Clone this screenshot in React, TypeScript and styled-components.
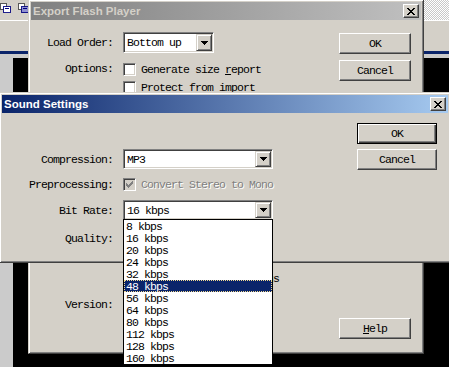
import React from "react";
import styled, { createGlobalStyle } from "styled-components";

const face = "#d4d0c8";
const mono = `"Liberation Mono", "DejaVu Sans Mono", monospace`;

const GlobalStyle = createGlobalStyle`
  html, body { margin: 0; padding: 0; }
  body {
    width: 449px;
    height: 367px;
    overflow: hidden;
    background: #000;
    font-family: ${mono};
    font-size: 11.5px;
    letter-spacing: -0.9px;
    color: #000;
  }
`;

const Screen = styled.div`
  position: relative;
  width: 449px;
  height: 367px;
  overflow: hidden;
  display: flex;
  flex-direction: column;
  background: ${face};
`;

// ---- application behind the dialogs ----

const Toolbar = styled.div`
  height: 20px;
  display: flex;
  border-bottom: 1px solid #fff;
`;

const ToolIcons = styled.div`
  width: 28px;
  display: flex;
  gap: 7px;
  padding-top: 2px;
  background: ${face};
`;

const Checker = styled.div`
  flex: 1;
  background-color: #fff;
  background-image: conic-gradient(#c8c8c8 25%, #fff 0 50%, #c8c8c8 0 75%, #fff 0);
  background-size: 2px 2px;
`;

const Panel = styled.div`
  height: 30px;
  background: ${face};
`;

const TimelineBar = styled.div`
  height: 3px;
  background: #0a246a;
`;

const Strip = styled.div`
  height: 4px;
  background: #cbcbcb;
`;

const Stage = styled.div`
  flex: 1;
  display: flex;
`;

const Ruler = styled.div`
  width: 13px;
  background: #cbcbcb;
`;

const Canvas = styled.div`
  flex: 1;
  background: #000;
`;

// ---- window chrome ----

const Window = styled.div<{ $left: number; $top: number; $width: number; $height: number }>`
  position: absolute;
  left: ${(p) => p.$left}px;
  top: ${(p) => p.$top}px;
  width: ${(p) => p.$width}px;
  height: ${(p) => p.$height}px;
  box-sizing: border-box;
  display: flex;
  flex-direction: column;
  padding: 2px;
  background: ${face};
  border: 1px solid;
  border-color: ${face} #404040 #404040 ${face};
  box-shadow: inset 1px 1px #fff, inset -1px -1px #808080;
`;

const TitleBar = styled.div<{ $active?: boolean }>`
  height: 18px;
  flex-shrink: 0;
  display: flex;
  align-items: center;
  justify-content: space-between;
  padding: 0 2px;
  background: ${(p) =>
    p.$active
      ? "linear-gradient(to right, #0a246a, #a6caf0)"
      : "linear-gradient(to right, #808080, #c0c0c0)"};
  color: ${(p) => (p.$active ? "#fff" : face)};
  font-family: "Liberation Sans", Arial, sans-serif;
  font-weight: bold;
  font-size: 11.5px;
  letter-spacing: 0;
`;

const CloseButton = styled.div`
  width: 16px;
  height: 14px;
  box-sizing: border-box;
  display: flex;
  align-items: center;
  justify-content: center;
  background: ${face};
  border: 1px solid;
  border-color: #fff #404040 #404040 #fff;
  box-shadow: inset -1px -1px #808080;
`;

const Body = styled.div<{ $padRight: number }>`
  flex: 1;
  display: flex;
  padding-right: ${(p) => p.$padRight}px;
`;

const Form = styled.div<{ $label: number; $rows: string; $gap: number; $top: number; $bottom: number }>`
  flex: 1;
  display: grid;
  grid-template-columns: ${(p) => p.$label}px 1fr;
  grid-template-rows: ${(p) => p.$rows};
  column-gap: 10px;
  row-gap: ${(p) => p.$gap}px;
  align-items: center;
  padding-top: ${(p) => p.$top}px;
  padding-bottom: ${(p) => p.$bottom}px;
`;

const Label = styled.div<{ $top?: boolean }>`
  text-align: right;
  white-space: nowrap;
  align-self: ${(p) => (p.$top ? "start" : "center")};
  line-height: ${(p) => (p.$top ? "18px" : "normal")};
`;

const Spacer = styled.div`
  grid-column: 1 / -1;
`;

const ButtonColumn = styled.div<{ $top: number; $gap: number; $bottom?: number }>`
  display: flex;
  flex-direction: column;
  gap: ${(p) => p.$gap}px;
  padding-top: ${(p) => p.$top}px;
  padding-bottom: ${(p) => p.$bottom ?? 0}px;
`;

const Button = styled.div<{ $width: number; $default?: boolean; $push?: boolean }>`
  width: ${(p) => p.$width}px;
  height: 21px;
  box-sizing: border-box;
  display: flex;
  align-items: center;
  justify-content: center;
  background: ${face};
  margin-top: ${(p) => (p.$push ? "auto" : "0")};
  border: 1px solid;
  border-color: ${(p) => (p.$default ? "#000" : "#fff #404040 #404040 #fff")};
  box-shadow: ${(p) =>
    p.$default
      ? "inset 1px 1px #fff, inset -1px -1px #404040, inset -2px -2px #808080"
      : "inset -1px -1px #808080"};
`;

// ---- controls ----

const Combo = styled.div<{ $width: number; $height: number }>`
  position: relative;
  width: ${(p) => p.$width}px;
  height: ${(p) => p.$height}px;
  box-sizing: border-box;
  display: flex;
  align-items: center;
  justify-content: space-between;
  padding: 0 1px 0 3px;
  background: #fff;
  border: 1px solid;
  border-color: #808080 #fff #fff #808080;
  box-shadow: inset 1px 1px #404040, inset -1px -1px ${face};
`;

const ComboButton = styled.div`
  width: 16px;
  height: calc(100% - 2px);
  box-sizing: border-box;
  display: flex;
  align-items: center;
  justify-content: center;
  background: ${face};
  border: 1px solid;
  border-color: ${face} #404040 #404040 ${face};
  box-shadow: inset 1px 1px #fff, inset -1px -1px #808080;
`;

const DropList = styled.div`
  position: absolute;
  left: -1px;
  top: 100%;
  width: 150px;
  box-sizing: border-box;
  background: #fff;
  border: 1px solid #000;
  z-index: 2;
`;

const ListItem = styled.div<{ $selected?: boolean }>`
  height: 12px;
  line-height: 13px;
  padding-left: 2px;
  white-space: nowrap;
  background: ${(p) => (p.$selected ? "#0a246a" : "transparent")};
  color: ${(p) => (p.$selected ? "#fff" : "#000")};
  outline: ${(p) => (p.$selected ? "1px dotted #f0d890" : "none")};
  outline-offset: -1px;
`;

const CheckList = styled.div`
  display: flex;
  flex-direction: column;
`;

const CheckRow = styled.div`
  height: 18px;
  display: flex;
  align-items: center;
  gap: 5px;
  white-space: nowrap;
`;

const Box = styled.div<{ $disabled?: boolean }>`
  width: 13px;
  height: 13px;
  flex-shrink: 0;
  box-sizing: border-box;
  display: flex;
  align-items: center;
  justify-content: center;
  background: ${(p) => (p.$disabled ? face : "#fff")};
  border: 1px solid;
  border-color: #808080 #fff #fff #808080;
  box-shadow: inset 1px 1px #404040, inset -1px -1px ${face};
`;

const CheckText = styled.span<{ $disabled?: boolean }>`
  color: ${(p) => (p.$disabled ? "#808080" : "#000")};
  text-shadow: ${(p) => (p.$disabled ? "1px 1px #fff" : "none")};
`;

const Pixels = styled.svg`
  display: block;
`;

const PixelArt = ({ rows, color }: { rows: string[]; color: string }) => (
  <Pixels
    width={rows[0].length}
    height={rows.length}
    viewBox={`0 0 ${rows[0].length} ${rows.length}`}
    shapeRendering="crispEdges"
  >
    {rows.flatMap((r, y) =>
      r.split("").map((c, x) =>
        c === "#" ? <rect key={`${x}-${y}`} x={x} y={y} width={1} height={1} fill={color} /> : null
      )
    )}
  </Pixels>
);

const closeGlyph = ["##....##", ".##..##.", "..####..", "...##...", "..####..", ".##..##.", "##....##"];
const arrowGlyph = ["#######", ".#####.", "..###..", "...#..."];
const checkGlyph = ["......#", ".....##", "#...###", "##.###.", "#####..", ".###...", "..#...."];

const Close = () => (
  <CloseButton>
    <PixelArt rows={closeGlyph} color="#000" />
  </CloseButton>
);

const Select = ({ value, width, height, children }: { value?: string; width: number; height: number; children?: React.ReactNode }) => (
  <Combo $width={width} $height={height}>
    <span>{value}</span>
    <ComboButton>
      <PixelArt rows={arrowGlyph} color="#000" />
    </ComboButton>
    {children}
  </Combo>
);

const Check = ({ label, checked, disabled }: { label: React.ReactNode; checked?: boolean; disabled?: boolean }) => (
  <CheckRow>
    <Box $disabled={disabled}>{checked && <PixelArt rows={checkGlyph} color={disabled ? "#808080" : "#000"} />}</Box>
    <CheckText $disabled={disabled}>{label}</CheckText>
  </CheckRow>
);

const ToolIcon = ({ fill }: { fill: string }) => (
  <svg width="12" height="12" viewBox="0 0 12 12" shapeRendering="crispEdges">
    <rect x="0.5" y="0.5" width="7" height="7" fill="#fff" stroke="#404040" />
    <rect x="4.5" y="4.5" width="7" height="7" fill={fill} stroke="#00007f" />
    <rect x="5.5" y="5.5" width="5" height="2" fill="#00007f" />
  </svg>
);

const rates = [8, 16, 20, 24, 32, 48, 56, 64, 80, 112, 128, 160];

export default function App() {
  return (
    <>
      <GlobalStyle />
      <Screen>
        <Toolbar>
          <ToolIcons>
            <ToolIcon fill="#fff" />
            <ToolIcon fill="#9090d0" />
          </ToolIcons>
          <Checker />
        </Toolbar>
        <Panel />
        <TimelineBar />
        <Strip />
        <Stage>
          <Ruler />
          <Canvas />
        </Stage>

        <Window $left={28} $top={-1} $width={396} $height={355}>
          <TitleBar>
            <span>Export Flash Player</span>
            <Close />
          </TitleBar>
          <Body $padRight={10}>
            <Form $label={82} $rows="21px auto 1fr 18px 21px" $gap={7} $top={12} $bottom={36}>
              <Label>Load Order:</Label>
              <Select value="Bottom up" width={91} height={21} />
              <Label $top>Options:</Label>
              <CheckList>
                <Check label={<>Generate size <u>r</u>eport</>} />
                <Check label="Protect from import" />
              </CheckList>
              <Spacer />
              <div />
              <Check label="Override sound settings" />
              <Label>Version:</Label>
              <Select width={120} height={21} />
            </Form>
            <ButtonColumn $top={13} $gap={6} $bottom={12}>
              <Button $width={72}>OK</Button>
              <Button $width={72}>Cancel</Button>
              <Button $width={72} $push>
                <u>H</u>elp
              </Button>
            </ButtonColumn>
          </Body>
        </Window>

        <Window $left={-1} $top={92} $width={452} $height={171}>
          <TitleBar $active>
            <span>Sound Settings</span>
            <Close />
          </TitleBar>
          <Body $padRight={11}>
            <Form $label={111} $rows="20px 21px 20px 26px" $gap={5} $top={36} $bottom={0}>
              <Label>Compression:</Label>
              <Select value="MP3" width={150} height={20} />
              <Label>Preprocessing:</Label>
              <Check label="Convert Stereo to Mono" checked disabled />
              <Label>Bit Rate:</Label>
              <Select value="16 kbps" width={150} height={20}>
                <DropList>
                  {rates.map((r) => (
                    <ListItem key={r} $selected={r === 48}>
                      {r} kbps
                    </ListItem>
                  ))}
                </DropList>
              </Select>
              <Label>Quality:</Label>
              <div />
            </Form>
            <ButtonColumn $top={10} $gap={5}>
              <Button $width={80} $default>
                OK
              </Button>
              <Button $width={80}>Cancel</Button>
            </ButtonColumn>
          </Body>
        </Window>
      </Screen>
    </>
  );
}
